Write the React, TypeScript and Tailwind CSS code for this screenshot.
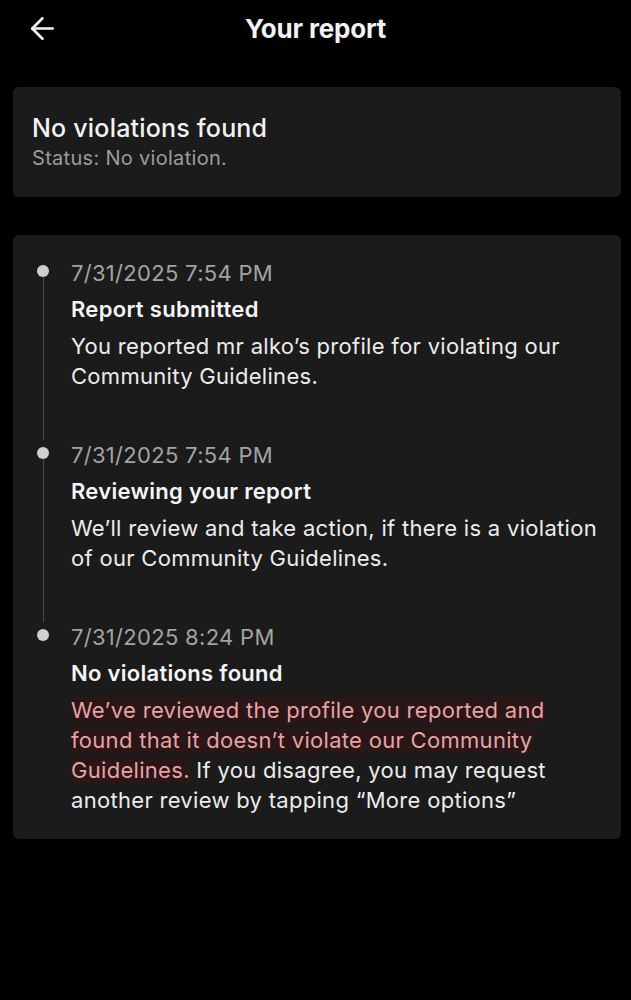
import { ArrowLeft } from "lucide-react";

interface Step {
  time: string;
  title: string;
  body: React.ReactNode;
}

const steps: Step[] = [
  {
    time: "7/31/2025 7:54 PM",
    title: "Report submitted",
    body: "You reported mr alko\u2019s profile for violating our Community Guidelines.",
  },
  {
    time: "7/31/2025 7:54 PM",
    title: "Reviewing your report",
    body: "We\u2019ll review and take action, if there is a violation of our Community Guidelines.",
  },
  {
    time: "7/31/2025 8:24 PM",
    title: "No violations found",
    body: (
      <>
        <span className="bg-[#2a1517] text-[#e7a3a5] [box-decoration-break:clone]">
          We{"\u2019"}ve reviewed the profile you reported and found that it doesn{"\u2019"}t violate our Community
          Guidelines.
        </span>{" "}
        If you disagree, you may request another review by tapping {"\u201C"}More options{"\u201D"}
      </>
    ),
  },
];

export default function App() {
  return (
    <div className="min-h-[1000px] w-full bg-black text-[#f2f2f2] font-['Inter','Liberation_Sans',sans-serif]">
      {/* Header */}
      <div className="relative flex h-14 items-center justify-center">
        <button className="absolute left-[25px] top-[11px] text-[#f2f2f2]">
          <ArrowLeft size={35} strokeWidth={1.8} />
        </button>
        <h1 className="text-[26px] font-bold tracking-[-0.2px]">Your report</h1>
      </div>

      <div className="pl-[13px] pr-[10px] pt-[31px]">
        {/* Status card */}
        <div className="rounded-[6px] bg-[#1b1b1b] px-[19px] pt-[25px] pb-[25px]">
          <div className="text-[25px] leading-[32px] font-medium tracking-[0.2px]">No violations found</div>
          <div className="text-[20px] leading-[28px] tracking-[0.3px] text-[#9b9b9b]">Status: No violation.</div>
        </div>

        {/* Timeline card */}
        <div className="mt-[38px] rounded-[6px] bg-[#1b1b1b] pl-[24px] pr-[16px] pt-[23px] pb-[24px] tracking-[0.3px]">
          {steps.map((step, i) => {
            const last = i === steps.length - 1;
            return (
              <div key={i} className="flex">
                <div className="flex w-[34px] shrink-0 flex-col items-center pr-[22px]">
                  <div className="mt-[7px] h-[12px] w-[12px] shrink-0 rounded-full bg-[#cfcfcf]" />
                  {!last && <div className="w-px flex-1 bg-[#4a4a4a]" />}
                </div>
                <div className={`flex-1 ${last ? "" : "pb-[49px]"}`}>
                  <div className="text-[22px] leading-[30px] text-[#a3a3a3]">{step.time}</div>
                  <div className="mt-[6px] text-[22px] leading-[30px] font-semibold text-[#f5f5f5]">{step.title}</div>
                  <div className="mt-[7px] text-[22px] leading-[30px] text-[#ececec]">{step.body}</div>
                </div>
              </div>
            );
          })}
        </div>
      </div>
    </div>
  );
}
